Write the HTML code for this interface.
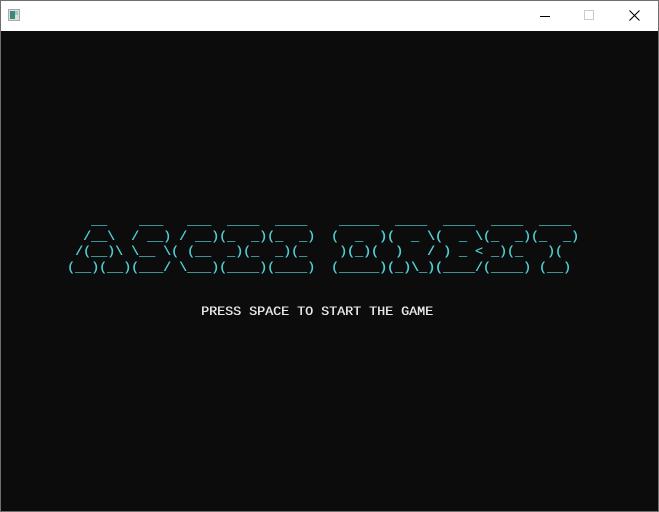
<!DOCTYPE html>
<html><head><meta charset="utf-8"><style>
html,body{margin:0;padding:0;}
body{width:659px;height:512px;position:relative;overflow:hidden;background:#6f6f6f;font-family:"Liberation Mono",monospace;}
#title{position:absolute;left:1px;top:1px;width:657px;height:30px;background:#fff;}
#main{position:absolute;left:1px;top:31px;width:657px;height:480px;background:#0c0c0c;}
pre{margin:0;position:absolute;font-family:"Liberation Mono",monospace;font-size:13.33px;white-space:pre;}
#art{left:67px;top:214px;line-height:15.7px;color:#4fcfd3;text-shadow:0.4px 0 0 #4fcfd3;}
#press{left:201px;top:305px;line-height:16px;color:#e8e8e8;text-shadow:0.4px 0 0 #e8e8e8;}
</style></head><body>
<div id="title">
<svg width="657" height="30" style="position:absolute;left:0;top:0">
<rect x="7.5" y="8.5" width="11" height="11" fill="#ddd" stroke="#aaa"/>
<rect x="9" y="10" width="5" height="8" fill="#3a8a7a"/>
<rect x="14" y="10" width="3" height="4" fill="#8fd0c0"/>
<line x1="539" y1="15.5" x2="549" y2="15.5" stroke="#000" stroke-width="1"/>
<rect x="583.5" y="9.5" width="9" height="9" fill="none" stroke="#ccc"/>
<path d="M628.5 9.5 L638.5 19.5 M638.5 9.5 L628.5 19.5" stroke="#000" stroke-width="1.1"/>
</svg>
</div>
<div id="main"></div>
<pre id="art">   __    ___   ___  ____  ____    _____  ____  ____  ____  ____ 
  /__\  / __) / __)(_  _)(_  _)  (  _  )(  _ \(  _ \(_  _)(_  _)
 /(__)\ \__ \( (__  _)(_  _)(_    )(_)(  )   / ) _ &lt; _)(_   )(  
(__)(__)(___/ \___)(____)(____)  (_____)(_)\_)(____/(____) (__) </pre>
<pre id="press">PRESS SPACE TO START THE GAME</pre>
</body></html>
